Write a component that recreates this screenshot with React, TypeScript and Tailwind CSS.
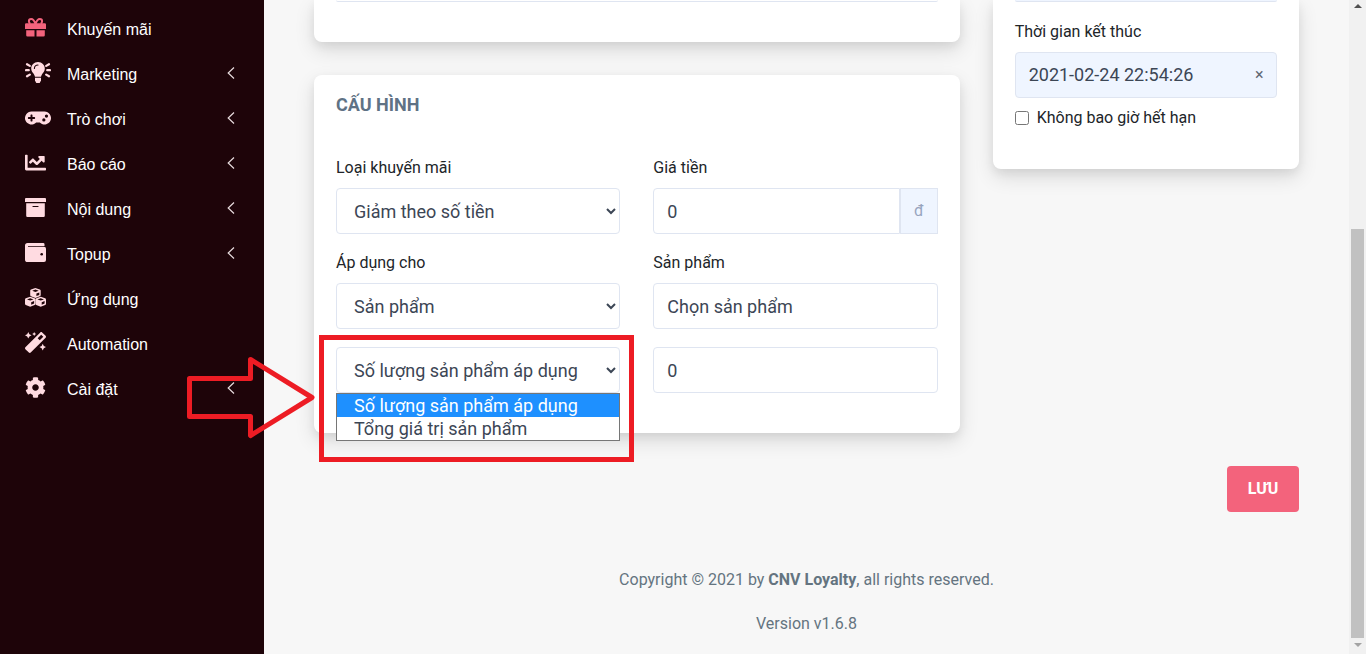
import type { ReactNode } from "react";
import { FaChartLine, FaCog, FaGamepad, FaMagic } from "react-icons/fa";

type MenuItem = {
  label: string;
  icon: ReactNode;
  expandable?: boolean;
  active?: boolean;
};

function GiftIcon() {
  return (
    <svg viewBox="0 0 21 19" width="21" height="19" fill="currentColor" aria-hidden="true">
      <path
        d="M10.500 6C9.500 3 8 1 6.200 1 4.800 1 3.900 2 3.900 3.200c0 1 .5 1.900 1.300 2.600M10.500 6C11.500 3 13 1 14.800 1c1.400 0 2.300 1 2.300 2.200 0 1-.5 1.900-1.300 2.600"
        fill="none"
        stroke="currentColor"
        strokeWidth="2"
      />
      <path d="M1.300 5.200h18.400A1.300 1.300 0 0 1 21 6.500V11H0V6.500a1.300 1.300 0 0 1 1.300-1.300Z" />
      <path d="M1.200 12.200h8.300v6.300H2.500a1.300 1.300 0 0 1-1.300-1.300ZM11.500 12.200h8.300v5a1.300 1.300 0 0 1-1.300 1.300h-7Z" />
    </svg>
  );
}

function BulbIcon() {
  return (
    <svg viewBox="0 0 26 21" width="26" height="21" fill="currentColor" aria-hidden="true">
      <path d="M13 0C9 0 6.200 3 6.200 6.500c0 1.900.8 3.200 1.800 4.500.9 1.200 1.600 2.200 2 3.700h6c.4-1.500 1.100-2.500 2-3.700 1-1.300 1.800-2.600 1.800-4.500C19.800 3 17 0 13 0Z" />
      <path d="M10 15.700h6v2.700L14.700 21h-3.400L10 18.400Z" />
      <path d="M9.400 6.500c0-2 1.500-3.500 3.600-3.500" fill="none" stroke="#1e0409" strokeWidth="1.100" strokeLinecap="round" />
      <path
        d="M1 8.200h2.800M22.200 8.200H25M2 2.200l2.800 1.700M24 2.200l-2.800 1.700M2 14.300l2.800-1.700M24 14.300l-2.800-1.700"
        fill="none"
        stroke="currentColor"
        strokeWidth="2.200"
        strokeLinecap="round"
      />
    </svg>
  );
}

function ArchiveIcon() {
  return (
    <svg viewBox="0 0 21 19" width="21" height="19" aria-hidden="true">
      <path d="M1 0h19a1 1 0 0 1 1 1v3H0V1a1 1 0 0 1 1-1ZM1.200 5.200h18.600v12.500a1.200 1.200 0 0 1-1.200 1.200H2.400a1.200 1.200 0 0 1-1.200-1.200Z" fill="currentColor" />
      <path d="M8 8.500h5" stroke="#1e0409" strokeWidth="1.200" strokeLinecap="round" />
    </svg>
  );
}

function WalletIcon() {
  return (
    <svg viewBox="0 0 21 19" width="21" height="19" aria-hidden="true">
      <path
        d="M2.600 0h15.600a1.300 1.300 0 0 1 1.300 1.300v1.600H3v.9h16a2 2 0 0 1 2 2V17a2 2 0 0 1-2 2H2.600A2.600 2.600 0 0 1 0 16.400V2.600A2.600 2.600 0 0 1 2.600 0Z"
        fill="currentColor"
      />
      <circle cx="16.700" cy="11.300" r="1.300" fill="#1e0409" />
    </svg>
  );
}

function Cube({ x, y }: { x: number; y: number }) {
  return (
    <g transform={`translate(${x} ${y})`}>
      <path d="M5.200 0 9.600 1.500Q10.500 1.900 10.500 2.700V7q0 .8-.8 1.200L5.200 10 .8 8.200Q0 7.800 0 7V2.700Q0 1.900.8 1.500Z" fill="currentColor" />
      <path d="M5.200 1.500 8.500 2.700 5.200 3.900 2 2.700ZM6.200 5.500 9.100 4.400V6.900L6.200 8.100Z" fill="#1e0409" />
    </g>
  );
}

function CubesIcon() {
  return (
    <svg viewBox="0 0 21 19" width="21" height="19" aria-hidden="true">
      <Cube x={5.2} y={0} />
      <Cube x={0} y={8.7} />
      <Cube x={10.500} y={8.7} />
    </svg>
  );
}

function ChevronLeft() {
  return (
    <svg viewBox="0 0 8 12" width="8" height="12" fill="none" stroke="#e8dcde" strokeWidth="1.200" aria-hidden="true">
      <path d="M7 .5 1.200 6 7 11.500" />
    </svg>
  );
}

const menu: MenuItem[] = [
  { label: "Khuyến mãi", icon: <GiftIcon />, active: true },
  { label: "Marketing", icon: <BulbIcon />, expandable: true },
  { label: "Trò chơi", icon: <FaGamepad size={26} />, expandable: true },
  { label: "Báo cáo", icon: <FaChartLine size={21} />, expandable: true },
  { label: "Nội dung", icon: <ArchiveIcon />, expandable: true },
  { label: "Topup", icon: <WalletIcon />, expandable: true },
  { label: "Ứng dụng", icon: <CubesIcon /> },
  { label: "Automation", icon: <FaMagic size={21} /> },
  { label: "Cài đặt", icon: <FaCog size={21} />, expandable: true },
];

function Sidebar() {
  return (
    <nav className="w-[264px] shrink-0 bg-[#1e0409] pt-[7px] font-['Liberation_Sans',sans-serif]">
      <ul>
        {menu.map((item) => (
          <li key={item.label}>
            <a href="#" className="flex h-[45px] items-center pr-[29px] pl-[25px] text-base text-white">
              <span
                className={
                  item.active
                    ? "flex w-[42px] items-center pb-1 text-[#f3637c]"
                    : "flex w-[42px] items-center pb-1 text-[#ffdbe1]"
                }
              >
                {item.icon}
              </span>
              <span className="flex-1">{item.label}</span>
              {item.expandable && (
                <span className="pb-1">
                  <ChevronLeft />
                </span>
              )}
            </a>
          </li>
        ))}
      </ul>
    </nav>
  );
}

const cardShadow = "bg-white shadow-[0_8px_20px_rgba(0,0,0,0.12),0_4px_10px_rgba(0,0,0,0.06)]";
const labelClass = "mb-[10px] block text-base leading-5 text-[#212529]";
const fieldClass =
  "h-[46px] w-full min-w-0 rounded border border-[#dfe5f1] bg-white px-[13px] text-lg text-[#3c4655]";

function SelectField({ id, label, options }: { id: string; label?: string; options: string[] }) {
  return (
    <div className="min-w-0">
      {label && (
        <label htmlFor={id} className={labelClass}>
          {label}
        </label>
      )}
      <select id={id} className={fieldClass} aria-label={label ?? "Điều kiện áp dụng"}>
        {options.map((option) => (
          <option key={option}>{option}</option>
        ))}
      </select>
    </div>
  );
}

function ConfigCard() {
  return (
    <section className={`${cardShadow} rounded-lg px-[22px] pt-4 pb-10`}>
      <h2 className="mb-[39px] text-lg leading-7 font-bold text-[#5f7285]">CẤU HÌNH</h2>
      <div className="grid grid-cols-2 gap-x-[33px] gap-y-[18px]">
        <SelectField id="type" label="Loại khuyến mãi" options={["Giảm theo số tiền"]} />
        <div className="min-w-0">
          <label htmlFor="price" className={labelClass}>
            Giá tiền
          </label>
          <div className="flex">
            <input
              id="price"
              defaultValue="0"
              className="h-[46px] min-w-0 flex-1 rounded-l border border-[#dfe5f1] px-[13px] text-lg text-[#3c4655]"
            />
            <span className="flex w-[38px] items-center justify-center border border-[#dfe5f1] bg-[#eff5ff] text-base text-[#97a4be]">
              đ
            </span>
          </div>
        </div>
        <div className="pt-px">
          <SelectField id="target" label="Áp dụng cho" options={["Sản phẩm"]} />
        </div>
        <div className="min-w-0 pt-px">
          <label htmlFor="product" className={labelClass}>
            Sản phẩm
          </label>
          <input id="product" defaultValue="Chọn sản phẩm" className={fieldClass} />
        </div>
        <div className="relative min-w-0">
          <SelectField id="condition" options={["Số lượng sản phẩm áp dụng", "Tổng giá trị sản phẩm"]} />
          <ul
            role="listbox"
            aria-label="Điều kiện"
            className="absolute top-[46px] left-0 z-10 w-full border border-[#767676] bg-white text-lg leading-[23px] text-[#3c4655]"
          >
            <li role="option" aria-selected="true" className="bg-[#1e90ff] px-[17px] text-white">
              Số lượng sản phẩm áp dụng
            </li>
            <li role="option" aria-selected="false" className="px-[17px]">
              Tổng giá trị sản phẩm
            </li>
          </ul>
          <div className="absolute -top-3 -right-3.5 z-20 h-[127px] w-[315px] border-5 border-[#ed1c24]" />
          <svg
            className="absolute top-2 right-[305px] z-20"
            width="130"
            height="84"
            viewBox="0 0 130 84"
            fill="none"
            stroke="#ed1c24"
            strokeWidth="5"
            strokeLinejoin="round"
            aria-hidden="true"
          >
            <path d="M4.500 23.500H65.500V4.500L127 42.500 65.500 80.500V61.500H4.500Z" />
          </svg>
        </div>
        <input aria-label="Giá trị" defaultValue="0" className={fieldClass} />
      </div>
    </section>
  );
}

function TimeCard() {
  return (
    <section className={`${cardShadow} self-start rounded-b-lg px-[22px] pb-[41px]`}>
      <div className="mb-5 h-0.5 rounded-b border-b border-[#dfe5f1] bg-[#eff5ff]" />
      <label htmlFor="end" className={labelClass}>
        Thời gian kết thúc
      </label>
      <div className="flex h-[46px] items-center rounded border border-[#dfe5f1] bg-[#eff5ff] px-[13px]">
        <input id="end" defaultValue="2021-02-24 22:54:26" className="min-w-0 flex-1 text-lg text-[#3c4655]" />
        <button type="button" aria-label="Xóa" className="w-2 text-base text-[#5f6773]">
          ×
        </button>
      </div>
      <label className="mt-[10px] flex items-center gap-2 text-base leading-5 text-[#212529]">
        <input type="checkbox" className="size-[14px]" />
        Không bao giờ hết hạn
      </label>
    </section>
  );
}

function Scrollbar() {
  return (
    <div className="flex w-[17px] shrink-0 flex-col items-center bg-[#f1f1f1]" aria-hidden="true">
      <svg width="8" height="12" viewBox="0 0 8 12" fill="#505050">
        <path d="M4 4 8 8H0Z" />
      </svg>
      <div className="grow-[217]" />
      <div className="w-[13px] grow-[409] bg-[#c1c1c1]" />
      <svg width="8" height="16" viewBox="0 0 8 16" fill="#a3a3a3">
        <path d="M0 5h8L4 9Z" />
      </svg>
    </div>
  );
}

export default function App() {
  return (
    <div className="flex h-screen bg-white pb-[5px] font-[Roboto,sans-serif]">
      <Sidebar />
      <main className="min-w-0 flex-1 bg-[#f7f7f7] px-[50px]">
        <div className="grid grid-cols-3 gap-[33px]">
          <div className="col-span-2 flex flex-col gap-[33px]">
            <section className={`${cardShadow} rounded-b-lg px-[22px] pb-10`}>
              <div className="h-0.5 rounded-b border-b border-[#dfe5f1]" />
            </section>
            <ConfigCard />
          </div>
          <TimeCard />
        </div>
        <div className="mt-[33px] flex justify-end">
          <button type="button" className="h-[46px] w-[72px] rounded bg-[#f3637c] text-base font-bold text-white">
            LƯU
          </button>
        </div>
        <footer className="mt-14 flex flex-col gap-5 text-center text-base text-[#647480]">
          <p>
            Copyright © 2021 by <strong className="font-bold">CNV Loyalty</strong>, all rights reserved.
          </p>
          <p>Version v1.6.8</p>
        </footer>
      </main>
      <Scrollbar />
    </div>
  );
}
